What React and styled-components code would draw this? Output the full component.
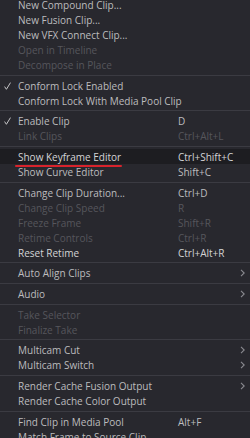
import React from "react";
import styled, { createGlobalStyle } from "styled-components";

const Global = createGlobalStyle`
  html, body { margin: 0; padding: 0; background: #28282e; }
  body { width: 250px; height: 438px; overflow: hidden; }
`;

const Menu = styled.div`
  width: 250px;
  margin-top: -2.5px;
  background: #28282e;
  font-family: "Open Sans", "Noto Sans", sans-serif;
  font-size: 10px;
  display: flex;
  flex-direction: column;
`;

const Row = styled.div`
  position: relative;
  height: 15px;
  display: grid;
  grid-template-columns: 18px 160px 1fr 12px;
  align-items: center;
  background: ${(p) => (p.$active ? "#1d1d21" : "transparent")};
  color: ${(p) => (p.$disabled ? "#56565c" : p.$bright ? "#d4d4d6" : "#bcbcbe")};
  white-space: nowrap;
`;

const Check = styled.span`
  display: flex;
  align-items: center;
  padding-left: 4px;
  color: #c4c4c6;
`;

const Label = styled.span``;
const Shortcut = styled.span``;

const Chevron = styled.span`
  display: flex;
  align-items: center;
  justify-content: flex-end;
  padding-right: 5px;
  color: #8a8a90;
`;

const Underline = styled.div`
  position: absolute;
  left: 15px;
  width: 107px;
  bottom: -3px;
  height: 2px;
  background: #d8232c;
  border-radius: 1px;
`;

const Sep = styled.div`
  height: 1px;
  margin: 2.33px 0;
  background: #3b3b42;
`;

const ChevronIcon = () => (
  <svg width="5" height="8" viewBox="0 0 5 8">
    <path d="M1 0.8 L4.2 4 L1 7.2" fill="none" stroke="currentColor" strokeWidth="1.1" />
  </svg>
);

const CheckIcon = () => (
  <svg width="7" height="8" viewBox="0 0 7 8">
    <path d="M0.6 4.6 L2.4 7.3 L6.5 0.6" fill="none" stroke="currentColor" strokeWidth="1" />
  </svg>
);

const items = [
  { l: "New Compound Clip..." },
  { l: "New Fusion Clip..." },
  { l: "New VFX Connect Clip..." },
  { l: "Open in Timeline", d: true },
  { l: "Decompose in Place", d: true },
  "sep",
  { l: "Conform Lock Enabled", c: true },
  { l: "Conform Lock With Media Pool Clip" },
  "sep",
  { l: "Enable Clip", c: true, s: "D" },
  { l: "Link Clips", d: true, s: "Ctrl+Alt+L" },
  "sep",
  { l: "Show Keyframe Editor", s: "Ctrl+Shift+C", a: true },
  { l: "Show Curve Editor", s: "Shift+C" },
  "sep",
  { l: "Change Clip Duration...", s: "Ctrl+D" },
  { l: "Change Clip Speed", s: "R", d: true },
  { l: "Freeze Frame", s: "Shift+R", d: true },
  { l: "Retime Controls", s: "Ctrl+R", d: true },
  { l: "Reset Retime", s: "Ctrl+Alt+R", b: true },
  "sep",
  { l: "Auto Align Clips", sub: true },
  "sep",
  { l: "Audio", sub: true },
  "sep",
  { l: "Take Selector", d: true },
  { l: "Finalize Take", d: true },
  "sep",
  { l: "Multicam Cut", sub: true },
  { l: "Multicam Switch", sub: true },
  "sep",
  { l: "Render Cache Fusion Output", sub: true },
  { l: "Render Cache Color Output" },
  "sep",
  { l: "Find Clip in Media Pool", s: "Alt+F" },
  { l: "Match Frame to Source Clip" },
];

export default function App() {
  return (
    <>
      <Global />
      <Menu>
        {items.map((it, i) =>
          it === "sep" ? (
            <Sep key={i} />
          ) : (
            <Row key={i} $disabled={it.d} $active={it.a} $bright={it.a || it.b}>
              <Check>{it.c ? <CheckIcon /> : null}</Check>
              <Label>{it.l}</Label>
              <Shortcut>{it.s || ""}</Shortcut>
              <Chevron>{it.sub ? <ChevronIcon /> : null}</Chevron>
              {it.a && <Underline />}
            </Row>
          )
        )}
      </Menu>
    </>
  );
}
